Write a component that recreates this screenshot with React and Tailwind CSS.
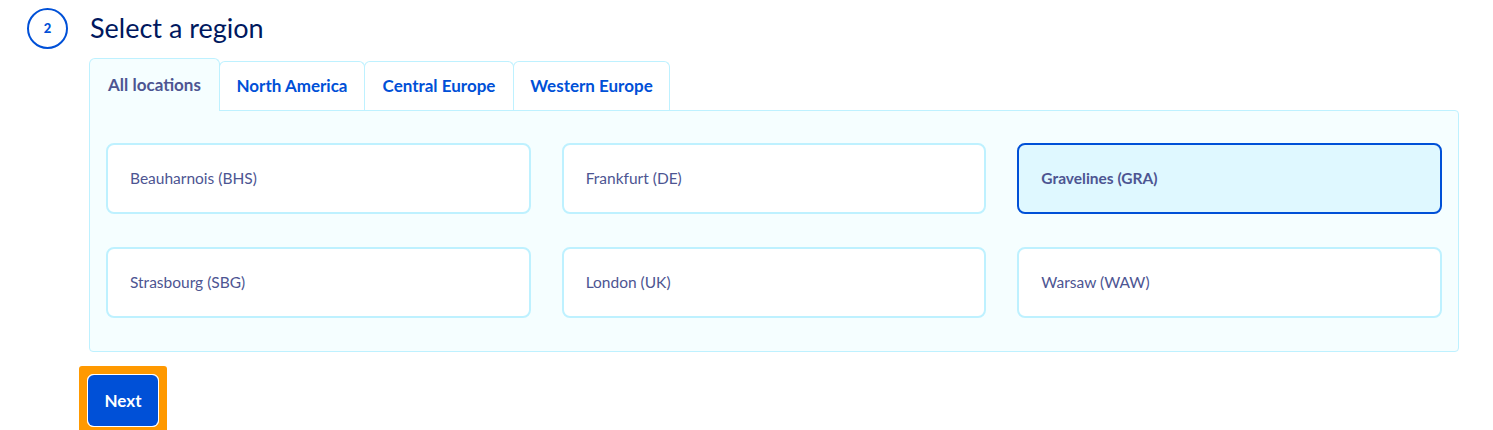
export default function App() {
  const tabs = ["All locations", "North America", "Central Europe", "Western Europe"];
  const regions = [
    "Beauharnois (BHS)",
    "Frankfurt (DE)",
    "Gravelines (GRA)",
    "Strasbourg (SBG)",
    "London (UK)",
    "Warsaw (WAW)",
  ];
  return (
    <div className="w-[1493px] h-[430px] bg-white overflow-hidden" style={{ fontFamily: '"Lato", "Noto Sans", sans-serif' }}>
      <div className="flex items-center pl-[27px] pt-[8px]">
        <div className="w-[41px] h-[41px] rounded-full border-2 border-[#0050d7] flex items-center justify-center text-[13px] font-black text-[#0050d7]">
          2
        </div>
        <h2 className="ml-[22px] text-[27px] leading-[40px] text-[#00185e] -mt-[2px]">Select a region</h2>
      </div>
      <div className="ml-[89px] mr-[34px] mt-[9px]">
        <div className="flex items-end h-[52px]">
          {tabs.map((t, i) =>
            i === 0 ? (
              <div
                key={t}
                className="h-[53px] -mb-px relative z-10 flex items-center justify-center rounded-t-[6px] border border-b-0 border-[#bef1ff] bg-[#f5feff] text-[17px] font-bold text-[#4d5592] w-[131px]"
              >
                {t}
              </div>
            ) : (
              <div
                key={t}
                className="h-[49px] flex items-center justify-center rounded-t-[6px] border border-b-0 border-[#bef1ff] bg-white text-[17px] font-bold text-[#0050d7] -ml-px"
                style={{ width: [131, 146, 150, 157][i] }}
              >
                {t}
              </div>
            )
          )}
        </div>
        <div className="h-[242px] border border-[#bef1ff] bg-[#f5feff] rounded-b-[4px] rounded-tr-[4px] px-[16px] pt-[32px]">
          <div className="grid grid-cols-3 gap-x-[31px] gap-y-[33px]">
            {regions.map((r, i) => {
              const sel = i === 2;
              return (
                <div
                  key={r}
                  className={
                    "h-[71px] rounded-[8px] border-2 flex items-center px-[22px] text-[15.5px] " +
                    (sel
                      ? "border-[#0050d7] bg-[#dff8ff] font-bold text-[#4d5592]"
                      : "border-[#bef1ff] bg-white text-[#4d5592]")
                  }
                >
                  {r}
                </div>
              );
            })}
          </div>
        </div>
        <div className="mt-[14px] -ml-[10px] w-[88px] h-[69px] bg-[#ff9900] rounded-[3px] p-[8px]">
          <div className="w-full h-full border border-white rounded-[6px] bg-white">
            <button className="w-full h-full rounded-[6px] bg-[#0050d7] text-white font-bold text-[17px]">Next</button>
          </div>
        </div>
      </div>
    </div>
  );
}
